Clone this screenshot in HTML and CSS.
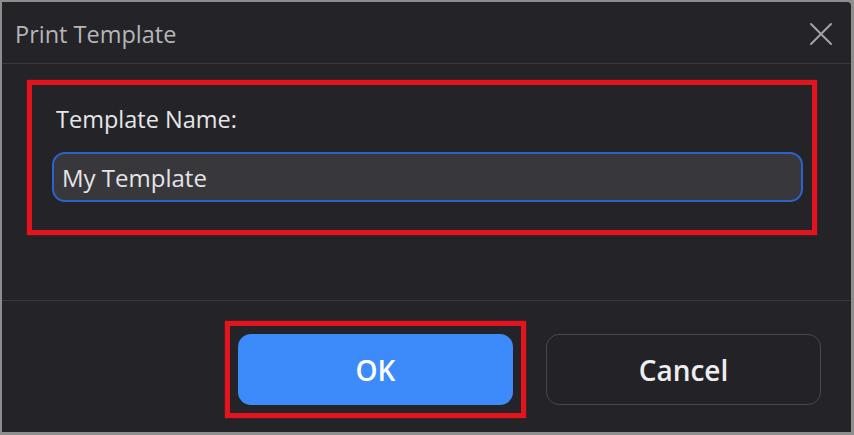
FILE: index.html
```html
<!DOCTYPE html>
<html lang="en">
<head>
<meta charset="utf-8">
<title>Print Template</title>
<link rel="stylesheet" href="styles.css">
</head>
<body>
<div class="window">
  <div class="titlebar">
    <span class="title">Print Template</span>
    <button class="close" aria-label="Close">
      <svg width="24" height="24" viewBox="0 0 24 24"><path d="M2 2 L22 22 M22 2 L2 22" stroke="#a3a3a6" stroke-width="2" fill="none" stroke-linecap="round"/></svg>
    </button>
  </div>
  <div class="content">
    <div class="highlight field-box">
      <label class="label" for="name">Template Name:</label>
      <input id="name" class="input" type="text" value="My Template">
    </div>
  </div>
  <div class="footer">
    <div class="highlight ok-box">
      <button class="btn btn-primary">OK</button>
    </div>
    <button class="btn btn-secondary">Cancel</button>
  </div>
</div>
</body>
</html>
```

FILE: styles.css
```css
* { box-sizing: border-box; }
html, body { margin: 0; padding: 0; }
body {
  background: #8e8e8e;
  width: 854px;
  height: 435px;
  overflow: hidden;
  font-family: "Open Sans", "Noto Sans", sans-serif;
}
.window {
  margin: 2px 3px 3px 2px;
  height: 430px;
  background: #242428;
  border-radius: 0 4px 0 0;
  display: flex;
  flex-direction: column;
}
.titlebar {
  height: 62px;
  border-bottom: 1px solid #38383d;
  display: flex;
  align-items: center;
  justify-content: space-between;
  padding: 2px 18px 0 13px;
}
.title {
  color: #b6b6b8;
  font-size: 23.5px;
}
.close {
  background: none;
  border: 0;
  padding: 0;
  width: 24px;
  height: 24px;
  display: flex;
}
.content {
  height: 236px;
  padding: 16px 0 0 25px;
}
.highlight {
  border: 5px solid #e3141d;
  box-shadow: 0 0 1px #e3141d;
}
.field-box {
  width: 790px;
  height: 155px;
  padding: 20px 9px 0 20px;
  display: flex;
  flex-direction: column;
}
.label {
  color: #e6e6e8;
  font-size: 23.5px;
  line-height: 28px;
  padding-left: 4px;
  margin-bottom: 19px;
}
.input {
  width: 751px;
  height: 50px;
  border: 2px solid #2d62cc;
  border-radius: 13px;
  background: #38383c;
  color: #e4e4e6;
  font-family: inherit;
  font-size: 24px;
  padding: 0 8px;
  outline: none;
}
.footer {
  flex: 1;
  border-top: 1px solid #38383d;
  display: flex;
  align-items: center;
  justify-content: flex-end;
  padding: 6px 30px 0 0;
}
.ok-box {
  padding: 8px;
  margin-right: 20px;
}
.btn {
  width: 275px;
  height: 71px;
  border-radius: 13px;
  font-family: inherit;
  font-size: 28px;
  font-weight: 600;
  color: #ffffff;
  display: flex;
  align-items: center;
  justify-content: center;
  padding: 0;
}
.btn-primary {
  background: #3d8bfa;
  border: 0;
}
.btn-secondary {
  background: #232327;
  border: 1px solid #48484d;
  color: #eeeef0;
}
```
